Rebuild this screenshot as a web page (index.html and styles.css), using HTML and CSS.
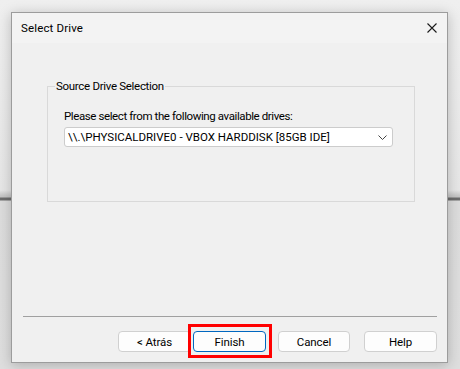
FILE: index.html
```html
<!DOCTYPE html>
<html lang="en">
<head>
    <meta charset="UTF-8">
    <meta name="viewport" content="width=device-width, initial-scale=1.0">
    <title>Select Drive</title>
    <link rel="stylesheet" href="styles.css">
</head>
<body>
    <div class="dialog">
        <div class="titlebar">
            <span class="title">Select Drive</span>
            <svg class="close" width="10" height="10" viewBox="0 0 10 10">
                <path d="M0.5 0.5 L9.5 9.5 M9.5 0.5 L0.5 9.5" stroke="#1a1a1a" stroke-width="1.1" fill="none"/>
            </svg>
        </div>

        <div class="content">
            <fieldset class="group">
                <legend>Source Drive Selection</legend>
                <div class="prompt">Please select from the following available drives:</div>
                <div class="combo">
                    <span class="combo-text">\\.\PHYSICALDRIVE0 - VBOX HARDDISK [85GB IDE]</span>
                    <svg width="9" height="5" viewBox="0 0 9 5">
                        <path d="M0.5 0.5 L4.5 4.5 L8.5 0.5" stroke="#444" stroke-width="1" fill="none"/>
                    </svg>
                </div>
            </fieldset>

            <div class="footer">
                <div class="separator"></div>
                <div class="buttons">
                    <button class="btn">&lt; Atrás</button>
                    <span class="highlight"><button class="btn default">Finish</button></span>
                    <button class="btn cancel">Cancel</button>
                    <button class="btn help">Help</button>
                </div>
            </div>
        </div>
    </div>
</body>
</html>
```

FILE: styles.css
```css
body {
    margin: 0;
    padding: 12px 0 0 11px;
    height: 369px;
    box-sizing: border-box;
    overflow: hidden;
    font-family: Roboto, "Liberation Sans", Arial, sans-serif;
    font-size: 11.5px;
    letter-spacing: -0.1px;
    color: #000;
    background-color: #e4e4e4;
    background-image: linear-gradient(to bottom,
        #efefef 0, #e6e6e6 190px,
        #c4c4c4 196px, #c4c4c4 197px,
        #6c6c6c 198px, #6c6c6c 200px,
        #dcdcdc 201px, #dedede 369px);
}
.dialog {
    width: 437px;
    height: 351px;
    box-sizing: border-box;
    border: 1px solid #9c9c9c;
    background-color: #f0f0f0;
    box-shadow: 0 2px 12px rgba(0, 0, 0, 0.22);
    display: flex;
    flex-direction: column;
}
.titlebar {
    height: 30px;
    background-color: #f3f3f3;
    display: flex;
    align-items: center;
    justify-content: space-between;
    padding: 0 10px 0 9px;
}
.title {
    letter-spacing: 0.15px;
}
.content {
    flex: 1;
    display: flex;
    flex-direction: column;
}
.group {
    margin: 35px 32px 0 35px;
    padding: 14px 21px 54px 16px;
    border: 1px solid #d9d9d9;
    min-width: 0;
}
.group legend {
    margin-left: -9px;
    padding: 0 1px;
    line-height: 16px;
    letter-spacing: -0.3px;
}
.prompt {
    line-height: 16px;
    letter-spacing: -0.4px;
}
.combo {
    margin-top: 3px;
    height: 20px;
    box-sizing: border-box;
    border: 1px solid #cccccc;
    border-radius: 3px;
    background-color: #fff;
    display: flex;
    align-items: center;
    justify-content: space-between;
    padding: 0 5px 0 3px;
}
.combo-text {
    letter-spacing: 0;
}
.footer {
    margin-top: auto;
    padding-bottom: 10px;
}
.separator {
    height: 1px;
    background-color: #a0a0a0;
    margin: 0 10px 14px 11px;
}
.buttons {
    display: flex;
    justify-content: flex-end;
    align-items: flex-start;
    padding-right: 10px;
}
.btn {
    width: 73px;
    height: 21px;
    box-sizing: border-box;
    border: 1px solid #d0d0d0;
    border-radius: 4px;
    background-color: #fdfdfd;
    font-family: Roboto, "Liberation Sans", Arial, sans-serif;
    font-size: 11.5px;
    letter-spacing: -0.1px;
    color: #000;
    padding: 0;
}
.btn.default {
    border-color: #0067c0;
}
.highlight {
    display: flex;
    border: 3px solid #ff0000;
    padding: 4px 3px 3px 2px;
    margin: -7px 6px -6px -3px;
}
.cancel {
    width: 72px;
}
.help {
    margin-left: 14px;
}
```
